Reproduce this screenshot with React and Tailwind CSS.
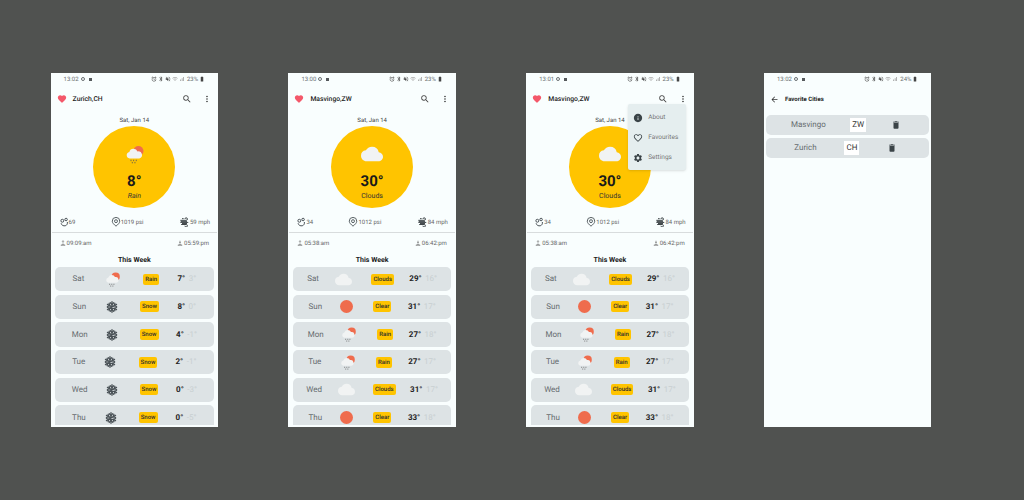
import { MdFavorite, MdFavoriteBorder, MdSearch, MdMoreVert, MdInfo, MdSettings, MdArrowBack, MdDelete, MdCloud, MdWifi, MdSignalCellularAlt, MdBatteryStd, MdAlarm, MdBluetooth, MdVolumeOff } from "react-icons/md";

const zurichDays = [
  { day: "Sat", icon: "rain", label: "Rain", hi: "7°", lo: "3°" },
  { day: "Sun", icon: "snow", label: "Snow", hi: "8°", lo: "0°" },
  { day: "Mon", icon: "snow", label: "Snow", hi: "4°", lo: "-1°" },
  { day: "Tue", icon: "snow", label: "Snow", hi: "2°", lo: "-1°" },
  { day: "Wed", icon: "snow", label: "Snow", hi: "0°", lo: "-3°" },
  { day: "Thu", icon: "snow", label: "Snow", hi: "0°", lo: "-5°" },
];

const masvingoDays = [
  { day: "Sat", icon: "clouds", label: "Clouds", hi: "29°", lo: "16°" },
  { day: "Sun", icon: "clear", label: "Clear", hi: "31°", lo: "17°" },
  { day: "Mon", icon: "rain", label: "Rain", hi: "27°", lo: "18°" },
  { day: "Tue", icon: "rain", label: "Rain", hi: "27°", lo: "17°" },
  { day: "Wed", icon: "clouds", label: "Clouds", hi: "31°", lo: "17°" },
  { day: "Thu", icon: "clear", label: "Clear", hi: "33°", lo: "18°" },
];

const RainIcon = ({ size = 20 }) => (
  <svg width={size} height={size} viewBox="0 0 24 24">
    <circle cx="16.5" cy="8" r="5.8" fill="#ef6c4d" />
    <path d="M6.5 16.5a3.8 3.8 0 0 1-.4-7.5 5 5 0 0 1 9.4-.4 4 4 0 0 1 2 7.9z" fill="#f1f3f3" />
    <g stroke="#555" strokeWidth="0.9">
      <path d="M8 18v1.6M11 18v1.6M14 18v1.6M9.5 20.5v1.6M12.5 20.5v1.6" />
    </g>
  </svg>
);

const SnowIcon = ({ size = 12 }) => (
  <svg width={size} height={size} viewBox="0 0 24 24" fill="none" stroke="#4a5257" strokeWidth="2.6" strokeLinecap="round">
    <path d="M12 1.5v21M2.9 6.8l18.2 10.4M2.9 17.2l18.2-10.4" />
    <path d="M8.5 3.5 12 7l3.5-3.5M8.5 20.5 12 17l3.5 3.5M2.8 11 7.5 9.5 6.2 4.8M21.2 11l-4.7-1.5 1.3-4.7M2.8 13l4.7 1.5-1.3 4.7M21.2 13l-4.7 1.5 1.3 4.7" />
  </svg>
);

const WeatherIcon = ({ type }) => {
  if (type === "rain") return <RainIcon size={17} />;
  if (type === "snow") return <SnowIcon />;
  if (type === "clear") return <div className="w-[13px] h-[13px] rounded-full bg-[#ef6c4d]" />;
  return <MdCloud className="text-[#f1f3f3] text-[17px]" />;
};

const StatusBar = ({ time, battery }) => (
  <div className="flex items-center justify-between h-[12px] pl-[13px] pr-[13px] text-[6px] text-[#6b7073]">
    <div className="flex items-center gap-[2px]">
      <span>{time}</span>
      <span className="w-[4px] h-[4px] rounded-full border border-[#6b7073]" />
      <span className="ml-[2px] w-[3px] h-[3px] bg-[#55595c]" />
    </div>
    <div className="flex items-center gap-[1px]">
      <MdAlarm className="text-[6px] text-[#444]" />
      <MdBluetooth className="text-[6px] text-[#444]" />
      <MdVolumeOff className="text-[6px] text-[#444]" />
      <MdWifi className="text-[6px] text-[#aaa]" />
      <MdSignalCellularAlt className="text-[6px] text-[#999]" />
      <span className="ml-[1px]">{battery}</span>
      <MdBatteryStd className="text-[6px] text-[#444]" />
    </div>
  </div>
);

const HumidityIcon = () => (
  <svg width="10" height="10" viewBox="0 0 24 24" fill="none" stroke="#4a5257" strokeWidth="2.4">
    <circle cx="8" cy="9" r="3.5" />
    <circle cx="17" cy="6" r="3" />
    <path d="M5 15c1 5 6 7 10 6s6-5 5-9" />
  </svg>
);

const PressureIcon = () => (
  <svg width="10" height="10" viewBox="0 0 24 24" fill="none" stroke="#5a6266" strokeWidth="2.4">
    <path d="M12 22c-5-4-9-8-9-12a9 9 0 0 1 18 0c0 4-4 8-9 12z" />
    <circle cx="12" cy="10" r="3.5" />
  </svg>
);

const WindIcon = () => (
  <svg width="11" height="10" viewBox="0 0 24 24" fill="none" stroke="#3f4649" strokeWidth="2.4">
    <path d="M2 8h14a3 3 0 1 0-3-3M2 13h19M4 18h12a3 3 0 1 1-3 3M6 4h4M3 10.5h15M6 15.5h12" />
  </svg>
);

const SunIcon = ({ down }) => (
  <svg width="6" height="6" viewBox="0 0 24 24" fill="none" stroke="#555" strokeWidth="2.4">
    <path d="M3 21h18M7 21a5 5 0 0 1 10 0" />
    <path d={down ? "M12 3v8M9 8l3 3 3-3" : "M12 11V3M9 6l3-3 3 3"} />
  </svg>
);

const ForecastRow = ({ day, icon, label, hi, lo }) => (
  <div className="shrink-0 flex items-center justify-evenly h-[24.3px] rounded-[5px] bg-[#dde3e5]">
    <span className="text-[8px] text-[#666c6f]">{day}</span>
    <div className="mx-[2px]">
      <WeatherIcon type={icon} />
    </div>
    <span className="ml-[3px] mr-[1px] px-[2px] py-[2px] rounded-[2px] bg-[#ffc400] text-[6px] leading-[7px] font-medium text-[#2e2e2e]">{label}</span>
    <span className="flex gap-[3.5px] text-[8px] font-bold text-[#222]">
      {hi}
      <span className="font-normal text-[#c8cfd1]">{lo}</span>
    </span>
  </div>
);

const WeatherScreen = ({ time, battery, city, date, temp, cond, condIcon, italic, humidity, pressure, wind, sunrise, sunset, days, menu }) => (
  <div className="relative w-[167.5px] h-[354px] shrink-0 overflow-hidden bg-[#f9fefe]">
    <StatusBar time={time} battery={battery} />
    <div className="flex items-center h-[20px] mt-[4px] pl-[6px] pr-[6px]">
      <MdFavorite className="text-[10px] text-[#f4586a]" />
      <span className="ml-[6px] text-[6.8px] font-medium text-[#222]">{city}</span>
      <MdSearch className="ml-auto text-[10px] text-[#444]" />
      <MdMoreVert className="ml-[10px] text-[10px] text-[#333]" />
    </div>
    <div className="mt-[8px] text-center text-[6px] leading-[7px] text-[#444]">{date}</div>
    <div className="mx-auto mt-[2px] w-[82px] h-[82px] rounded-full bg-[#ffc400] flex flex-col items-center pt-[17px]">
      <div className="h-[22px] flex items-center">
        {condIcon === "rain" ? <RainIcon size={21} /> : <MdCloud className="text-[#f1f3f3] text-[22px]" />}
      </div>
      <div className="mt-[7px] text-[15px] leading-[18px] font-bold text-[#1a1a1a]">{temp}</div>
      <div className={`text-[7px] leading-[9px] mt-[2px] text-[#333] ${italic ? "italic" : ""}`}>{cond}</div>
    </div>
    <div className="flex items-center justify-between h-[12px] mt-[8px] px-[8px] text-[6px] text-[#666]">
      <span className="flex items-center"><HumidityIcon />{humidity}</span>
      <span className="flex items-center"><PressureIcon />{pressure}</span>
      <span className="flex items-center"><WindIcon />{wind}</span>
    </div>
    <div className="mx-[1px] mt-[4px] h-px bg-[#d8dcdd]" />
    <div className="flex items-center justify-between h-[10px] mt-[5px] px-[9px] text-[6px] text-[#666]">
      <span className="flex items-center gap-[1px]"><SunIcon />{sunrise}</span>
      <span className="flex items-center gap-[1px]"><SunIcon down />{sunset}</span>
    </div>
    <div className="mt-[6px] h-[12px] text-center text-[7px] leading-[12px] font-bold text-[#222]">This Week</div>
    <div className="mt-[1px] mx-[4.5px] h-[158px] overflow-hidden flex flex-col gap-[3.4px]">
      {days.map((d) => (
        <ForecastRow key={d.day} {...d} />
      ))}
    </div>
    {menu && (
      <div className="absolute top-[31px] left-[102px] w-[58px] h-[66px] rounded-[2px] bg-[#e5eeef] shadow-sm flex flex-col gap-[10px] pt-[9px] pl-[5px]">
        <div className="flex items-center h-[10px] gap-[5px] text-[6.5px] text-[#777]"><MdInfo className="text-[10px] text-[#3a4347]" />About</div>
        <div className="flex items-center h-[10px] gap-[5px] text-[6.5px] text-[#777]"><MdFavoriteBorder className="text-[10px] text-[#3a4347]" />Favourites</div>
        <div className="flex items-center h-[10px] gap-[5px] text-[6.5px] text-[#777]"><MdSettings className="text-[10px] text-[#3a4347]" />Settings</div>
      </div>
    )}
  </div>
);

const CityRow = ({ name, code }) => (
  <div className="flex items-center justify-evenly h-[20px] rounded-[5px] bg-[#dde3e5] pr-[4px]">
    <span className="text-[8px] text-[#666c6f]">{name}</span>
    <span className="px-[2px] h-[14px] leading-[14px] bg-white text-[8px] text-[#333]">{code}</span>
    <MdDelete className="text-[10px] text-[#3a4347]" />
  </div>
);

const FavoritesScreen = () => (
  <div className="w-[167.5px] h-[354px] shrink-0 overflow-hidden bg-[#f9fefe]">
    <StatusBar time="13:02" battery="24%" />
    <div className="flex items-center h-[20px] mt-[4px] pl-[6px]">
      <MdArrowBack className="text-[9px] text-[#333]" />
      <span className="ml-[6px] text-[6px] font-bold text-[#222]">Favorite Cities</span>
    </div>
    <div className="mt-[6px] mx-[2.5px] flex flex-col gap-[3px]">
      <CityRow name="Masvingo" code="ZW" />
      <CityRow name="Zurich" code="CH" />
    </div>
  </div>
);

export default function App() {
  return (
    <div className="w-[1024px] h-[500px] overflow-hidden bg-[#505250] flex gap-[70.3px] pl-[50.6px] pt-[73px] font-['Roboto',sans-serif] [text-rendering:geometricPrecision]">
      <WeatherScreen time="13:02" battery="23%" city="Zurich,CH" date="Sat, Jan 14" temp="8°" cond="Rain" condIcon="rain" italic humidity="69" pressure="1019 psi" wind="59 mph" sunrise="09:09:am" sunset="05:59:pm" days={zurichDays} />
      <WeatherScreen time="13:00" battery="23%" city="Masvingo,ZW" date="Sat, Jan 14" temp="30°" cond="Clouds" condIcon="clouds" humidity="34" pressure="1012 psi" wind="84 mph" sunrise="05:38:am" sunset="06:42:pm" days={masvingoDays} />
      <WeatherScreen time="13:01" battery="23%" city="Masvingo,ZW" date="Sat, Jan 14" temp="30°" cond="Clouds" condIcon="clouds" humidity="34" pressure="1012 psi" wind="84 mph" sunrise="05:38:am" sunset="06:42:pm" days={masvingoDays} menu />
      <FavoritesScreen />
    </div>
  );
}
